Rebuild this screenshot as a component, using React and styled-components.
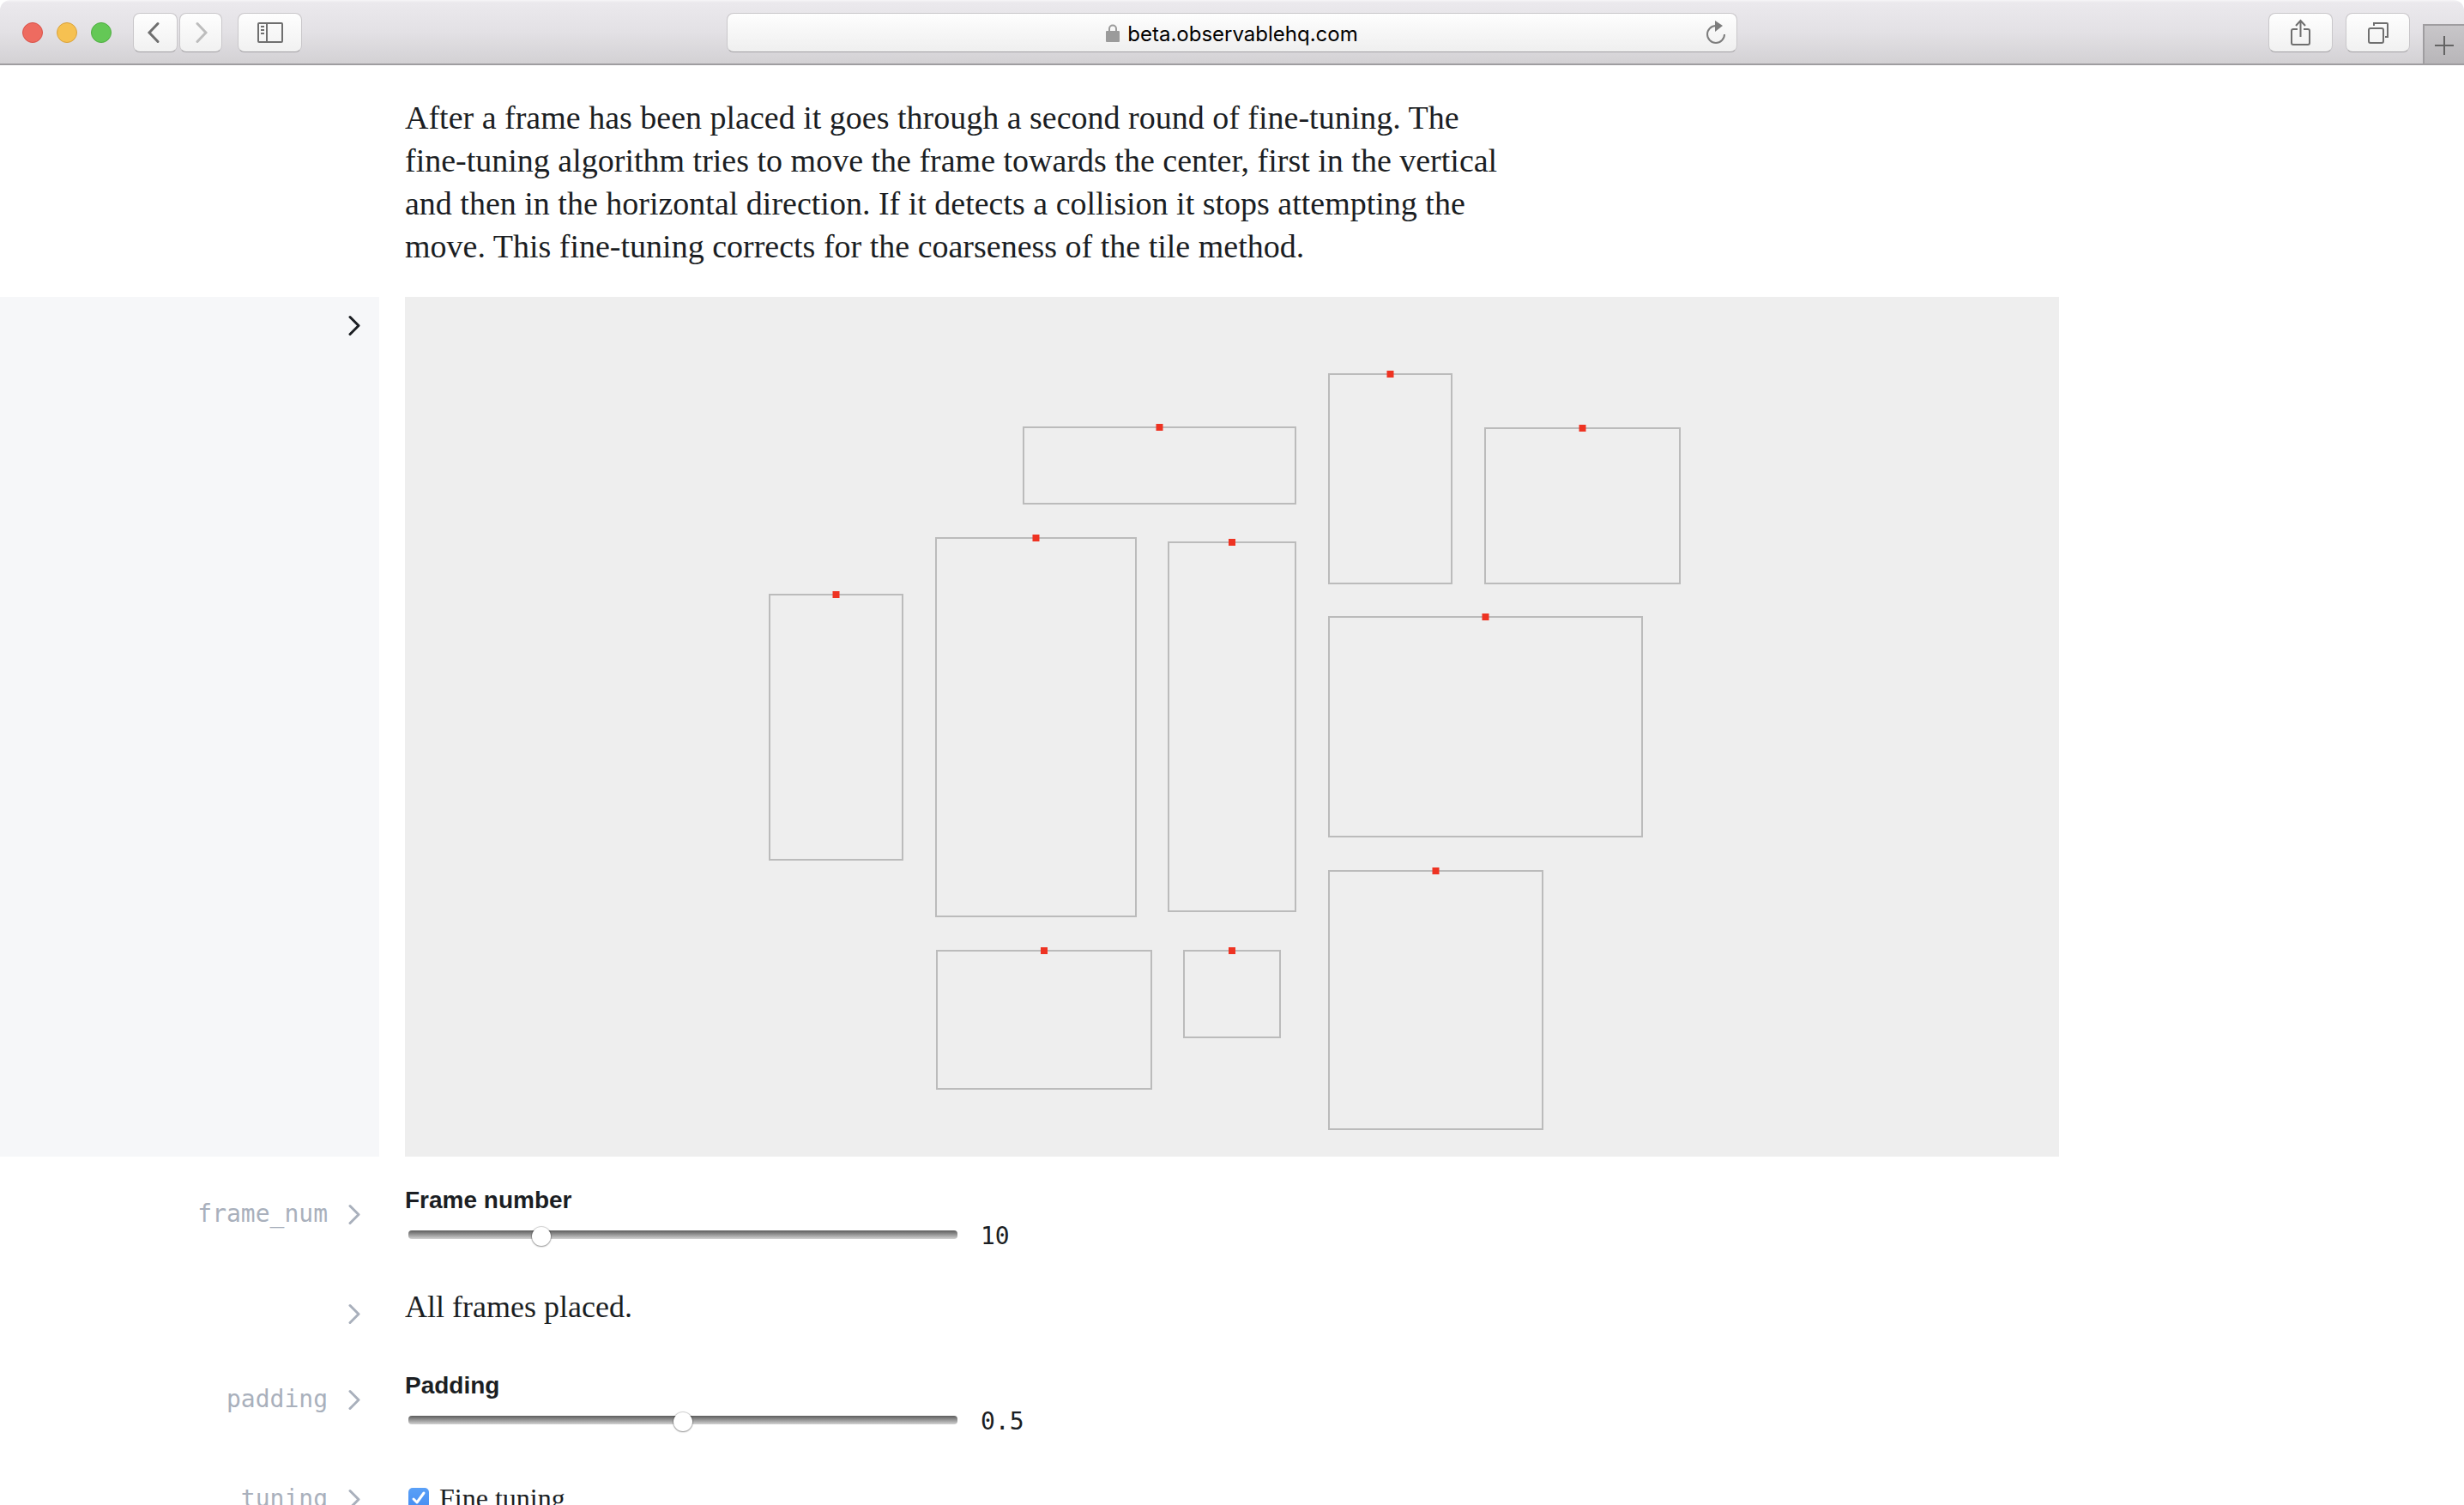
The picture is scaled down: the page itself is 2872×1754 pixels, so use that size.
import React, { useState } from "react";
import styled, { createGlobalStyle } from "styled-components";

const serif = `"Liberation Serif", "Times New Roman", serif`;
const sans = `"Liberation Sans", Helvetica, Arial, sans-serif`;
const mono = `"DejaVu Sans Mono", Menlo, monospace`;
const ink = "#1b1e23";
const muted = "#a9b0bc";

const GlobalStyle = createGlobalStyle`
  *, *::before, *::after { box-sizing: border-box; }
  body { margin: 0; background: #fff; color: ${ink}; }
  button, input { font: inherit; color: inherit; }
`;

const Window = styled.div`
  display: flex;
  flex-direction: column;
  height: 100vh;
  overflow: hidden;
`;

const Toolbar = styled.header`
  display: grid;
  grid-template-columns: 1fr 41% 1fr;
  flex: none;
  height: 76px;
  border-bottom: 2px solid #9f9da0;
  border-radius: 12px 12px 0 0;
  background: linear-gradient(#f6f5f7 0, #ebe9ed 3px, #e3e1e5 50%, #d3d1d4 100%);
`;

const Leading = styled.div`
  display: flex;
  align-items: flex-start;
  padding: 15px 0 0 26px;
`;

const Lights = styled.div`
  display: flex;
  gap: 16px;
  padding-top: 11px;
  margin-right: 25px;
`;

const Light = styled.button`
  width: 24px;
  height: 24px;
  padding: 0;
  border: 1px solid ${(p) => p.$edge};
  border-radius: 50%;
  background: ${(p) => p.$fill};
`;

const ToolButton = styled.button`
  display: flex;
  align-items: center;
  justify-content: center;
  width: ${(p) => p.$width || 75}px;
  height: 46px;
  padding: 0;
  border: 1px solid #c9c7ca;
  border-bottom-color: #a3a1a4;
  border-radius: 8px;
  background: linear-gradient(#fefefe, #f1f1f1);
  color: ${(p) => (p.$dim ? "#bdbdbd" : "#6f6f6f")};
`;

const NavPair = styled.div`
  display: flex;
  gap: 2px;
  margin-right: 18px;
`;

const AddressBar = styled.div`
  display: grid;
  grid-template-columns: 48px 1fr 48px;
  align-items: center;
  height: 46px;
  margin-top: 15px;
  border: 1px solid #c9c7ca;
  border-bottom-color: #a3a1a4;
  border-radius: 8px;
  background: linear-gradient(#fefefe, #efefef);
`;

const Address = styled.label`
  grid-column: 2;
  display: flex;
  align-items: center;
  justify-content: center;
  gap: 9px;
`;

const AddressInput = styled.input`
  field-sizing: content;
  height: 34px;
  padding: 2px 0 0;
  border: 0;
  outline: 0;
  background: none;
  color: #000;
  font: 24px/32px Inter, ${sans};
`;

const ReloadButton = styled.button`
  display: flex;
  justify-content: center;
  padding: 0;
  border: 0;
  background: none;
  color: #7d7d7d;
`;

const Trailing = styled.div`
  display: flex;
  align-items: flex-start;
  justify-content: flex-end;
  gap: 15px;
  padding-top: 15px;
`;

const NewTab = styled.button`
  display: flex;
  align-items: center;
  justify-content: center;
  width: 48px;
  height: 46px;
  margin-top: 13px;
  padding: 2px 0 0;
  border: solid #9f9da0;
  border-width: 2px 0 0 2px;
  background: linear-gradient(#c8c6c9, #b8b6b9);
  color: #646464;
`;

const Notebook = styled.main`
  display: flex;
  flex-direction: column;
  gap: 34px;
  flex: 1;
  min-height: 0;
  padding: 36px 0;
  overflow-y: auto;
  scrollbar-width: none;
`;

const ProseRow = styled.section`
  flex: none;
  padding-left: 472px;
`;

const CellRow = styled.section`
  display: grid;
  grid-template-columns: 442px minmax(0, 1928px);
  gap: 30px;
  flex: none;
`;

const Gutter = styled.div`
  display: flex;
  align-items: flex-start;
  justify-content: flex-end;
  gap: 22px;
  padding: 16px 22px 16px 0;
  background: ${(p) => (p.$active ? "#f6f7f9" : "none")};
  color: ${(p) => (p.$active ? ink : muted)};
  font: 28px/34px ${mono};
`;

const ExpandButton = styled.button`
  display: flex;
  align-items: center;
  height: 34px;
  padding: 0;
  border: 0;
  background: none;
`;

const Prose = styled.p`
  margin: 0;
  font: ${(p) => (p.$status ? 36 : 38)}px/50px ${serif};
`;

const Canvas = styled.svg`
  display: block;
  width: 100%;
  height: auto;
  background: #eee;
`;

const Field = styled.div`
  display: flex;
  flex-direction: column;
  gap: 4px;
`;

const FieldLabel = styled.label`
  font: bold 28px/34px ${sans};
`;

const FieldRow = styled.div`
  display: flex;
  align-items: center;
  gap: 27px;
  padding: 0 0 6px 4px;
`;

const Slider = styled.input`
  appearance: none;
  width: 640px;
  height: 22px;
  margin: 0;
  background: none;

  &::-webkit-slider-runnable-track {
    height: 10px;
    border-radius: 4px;
    background: linear-gradient(#5c5c5c, #d2d2d2);
  }

  &::-webkit-slider-thumb {
    appearance: none;
    width: 22px;
    height: 22px;
    margin-top: -4px;
    border-radius: 50%;
    background: #fff;
    box-shadow: 0 0 1px 1px rgba(0, 0, 0, 0.18), 0 1px 2px rgba(0, 0, 0, 0.3);
  }
`;

const Value = styled.output`
  padding-top: 4px;
  font: 28px/34px ${mono};
`;

const CheckLabel = styled.label`
  display: flex;
  align-items: center;
  gap: 12px;
  padding: 15px 0 17px 4px;
  font: 32px/34px ${serif};
`;

const CheckBox = styled.span`
  display: grid;
  width: 24px;
  height: 24px;

  & > * { grid-area: 1 / 1; }
  & > svg { pointer-events: none; }
  & > input:not(:checked) + svg { visibility: hidden; }
`;

const CheckInput = styled.input`
  appearance: none;
  width: 24px;
  height: 24px;
  margin: 0;
  border-radius: 5px;
  background: #d0d0d0;

  &:checked { background: linear-gradient(#5aa0f7, #468df2); }
`;

const frames = [
  [425, 347, 155, 309],
  [619, 281, 233, 441],
  [721, 152, 317, 89],
  [890, 286, 148, 430],
  [1077, 90, 143, 244],
  [1259, 153, 227, 181],
  [1077, 373, 365, 256],
  [1077, 669, 249, 301],
  [620, 762, 250, 161],
  [908, 762, 112, 101],
];

function FrameCanvas() {
  return (
    <Canvas viewBox="0 0 1928 1002" role="img" aria-label="Placed frames">
      {frames.map(([x, y, w, h]) => (
        <g key={`${x}-${y}`}>
          <rect x={x} y={y} width={w} height={h} fill="none" stroke="#bbb" strokeWidth="2" />
          <rect x={x + w / 2 - 4} y={y - 4} width="8" height="8" fill="#ee3322" />
        </g>
      ))}
    </Canvas>
  );
}

function Icon({ w, h, stroke = 2, children }) {
  return (
    <svg width={w} height={h} viewBox={`0 0 ${w} ${h}`} fill="none" stroke="currentColor" strokeWidth={stroke} aria-hidden="true">
      {children}
    </svg>
  );
}

function Cell({ name, active, children }) {
  return (
    <CellRow>
      <Gutter $active={active}>
        {name && <span>{name}</span>}
        <ExpandButton aria-label={`Edit ${name || "cell"}`}>
          <Icon w={16} h={26} stroke={3}>
            <path d="M4 3.500 14 13.500 4 23.500" strokeLinecap="round" strokeLinejoin="round" />
          </Icon>
        </ExpandButton>
      </Gutter>
      {children}
    </CellRow>
  );
}

function RangeField({ id, label, initial, ...range }) {
  const [value, setValue] = useState(initial);
  return (
    <Field>
      <FieldLabel htmlFor={id}>{label}</FieldLabel>
      <FieldRow>
        <Slider id={id} type="range" value={value} onChange={(e) => setValue(Number(e.target.value))} {...range} />
        <Value htmlFor={id}>{value}</Value>
      </FieldRow>
    </Field>
  );
}

function BrowserToolbar() {
  return (
    <Toolbar>
      <Leading>
        <Lights>
          <Light aria-label="Close" $fill="#ee6b60" $edge="#d9524a" />
          <Light aria-label="Minimize" $fill="#f6c151" $edge="#d9a23c" />
          <Light aria-label="Zoom" $fill="#64c856" $edge="#4fae41" />
        </Lights>
        <NavPair>
          <ToolButton $width={52} aria-label="Back">
            <Icon w={20} h={26} stroke={3}>
              <path d="M13 2.500 3 13 13 23.500" strokeLinecap="round" />
            </Icon>
          </ToolButton>
          <ToolButton $width={50} $dim aria-label="Forward">
            <Icon w={16} h={26} stroke={3}>
              <path d="M4 2.500 14 13 4 23.500" strokeLinecap="round" />
            </Icon>
          </ToolButton>
        </NavPair>
        <ToolButton aria-label="Show sidebar">
          <Icon w={30} h={24}>
            <rect x="1" y="1" width="28" height="22" rx="1" />
            <path d="M11 1V23M4 5H8M4 9H8M4 13H8" />
          </Icon>
        </ToolButton>
      </Leading>
      <AddressBar>
        <Address>
          <Icon w={16} h={21}>
            <path d="M4 9V5.500a4 4 0 0 1 8 0V9" stroke="#9b9b9b" />
            <rect y="8" width="16" height="13" rx="1" fill="#9b9b9b" stroke="none" />
          </Icon>
          <AddressInput aria-label="Address" defaultValue="beta.observablehq.com" />
        </Address>
        <ReloadButton aria-label="Reload">
          <Icon w={24} h={28}>
            <path d="M12 6A10 10 0 1 0 22 16" />
            <path d="M11 0 20 6 11 13Z" fill="currentColor" stroke="none" />
          </Icon>
        </ReloadButton>
      </AddressBar>
      <Trailing>
        <ToolButton aria-label="Share">
          <Icon w={24} h={32}>
            <path d="M8 12H3a2 2 0 0 0-2 2V28a2 2 0 0 0 2 2H20a2 2 0 0 0 2-2V14a2 2 0 0 0-2-2H15" />
            <path d="M11.500 21V2M6 8 11.500 2 17 8" />
          </Icon>
        </ToolButton>
        <ToolButton aria-label="Show tabs">
          <Icon w={26} h={26}>
            <rect x="2" y="8" width="17" height="17" rx="2" />
            <path d="M8 5V2H23a1 1 0 0 1 1 1V18H21" />
          </Icon>
        </ToolButton>
        <NewTab aria-label="New tab">
          <Icon w={22} h={22}>
            <path d="M11 0V22M0 11H22" />
          </Icon>
        </NewTab>
      </Trailing>
    </Toolbar>
  );
}

export default function App() {
  return (
    <Window>
      <GlobalStyle />
      <BrowserToolbar />
      <Notebook>
        <ProseRow>
          <Prose>
            After a frame has been placed it goes through a second round of fine-tuning. The
            <br />
            fine-tuning algorithm tries to move the frame towards the center, first in the vertical
            <br />
            and then in the horizontal direction. If it detects a collision it stops attempting the
            <br />
            move. This fine-tuning corrects for the coarseness of the tile method.
          </Prose>
        </ProseRow>
        <Cell active>
          <FrameCanvas />
        </Cell>
        <Cell name="frame_num">
          <RangeField id="frame-num" label="Frame number" initial={10} min={3} max={33} step={1} />
        </Cell>
        <Cell>
          <Prose $status>All frames placed.</Prose>
        </Cell>
        <Cell name="padding">
          <RangeField id="padding" label="Padding" initial={0.5} min={0} max={1} step={0.1} />
        </Cell>
        <Cell name="tuning">
          <CheckLabel>
            <CheckBox>
              <CheckInput type="checkbox" defaultChecked />
              <svg width="24" height="24" viewBox="0 0 24 24" fill="none" stroke="#fff" strokeWidth="3" aria-hidden="true">
                <path d="M6 13 10 17 18 6" strokeLinecap="round" strokeLinejoin="round" />
              </svg>
            </CheckBox>
            Fine tuning
          </CheckLabel>
        </Cell>
      </Notebook>
    </Window>
  );
}
